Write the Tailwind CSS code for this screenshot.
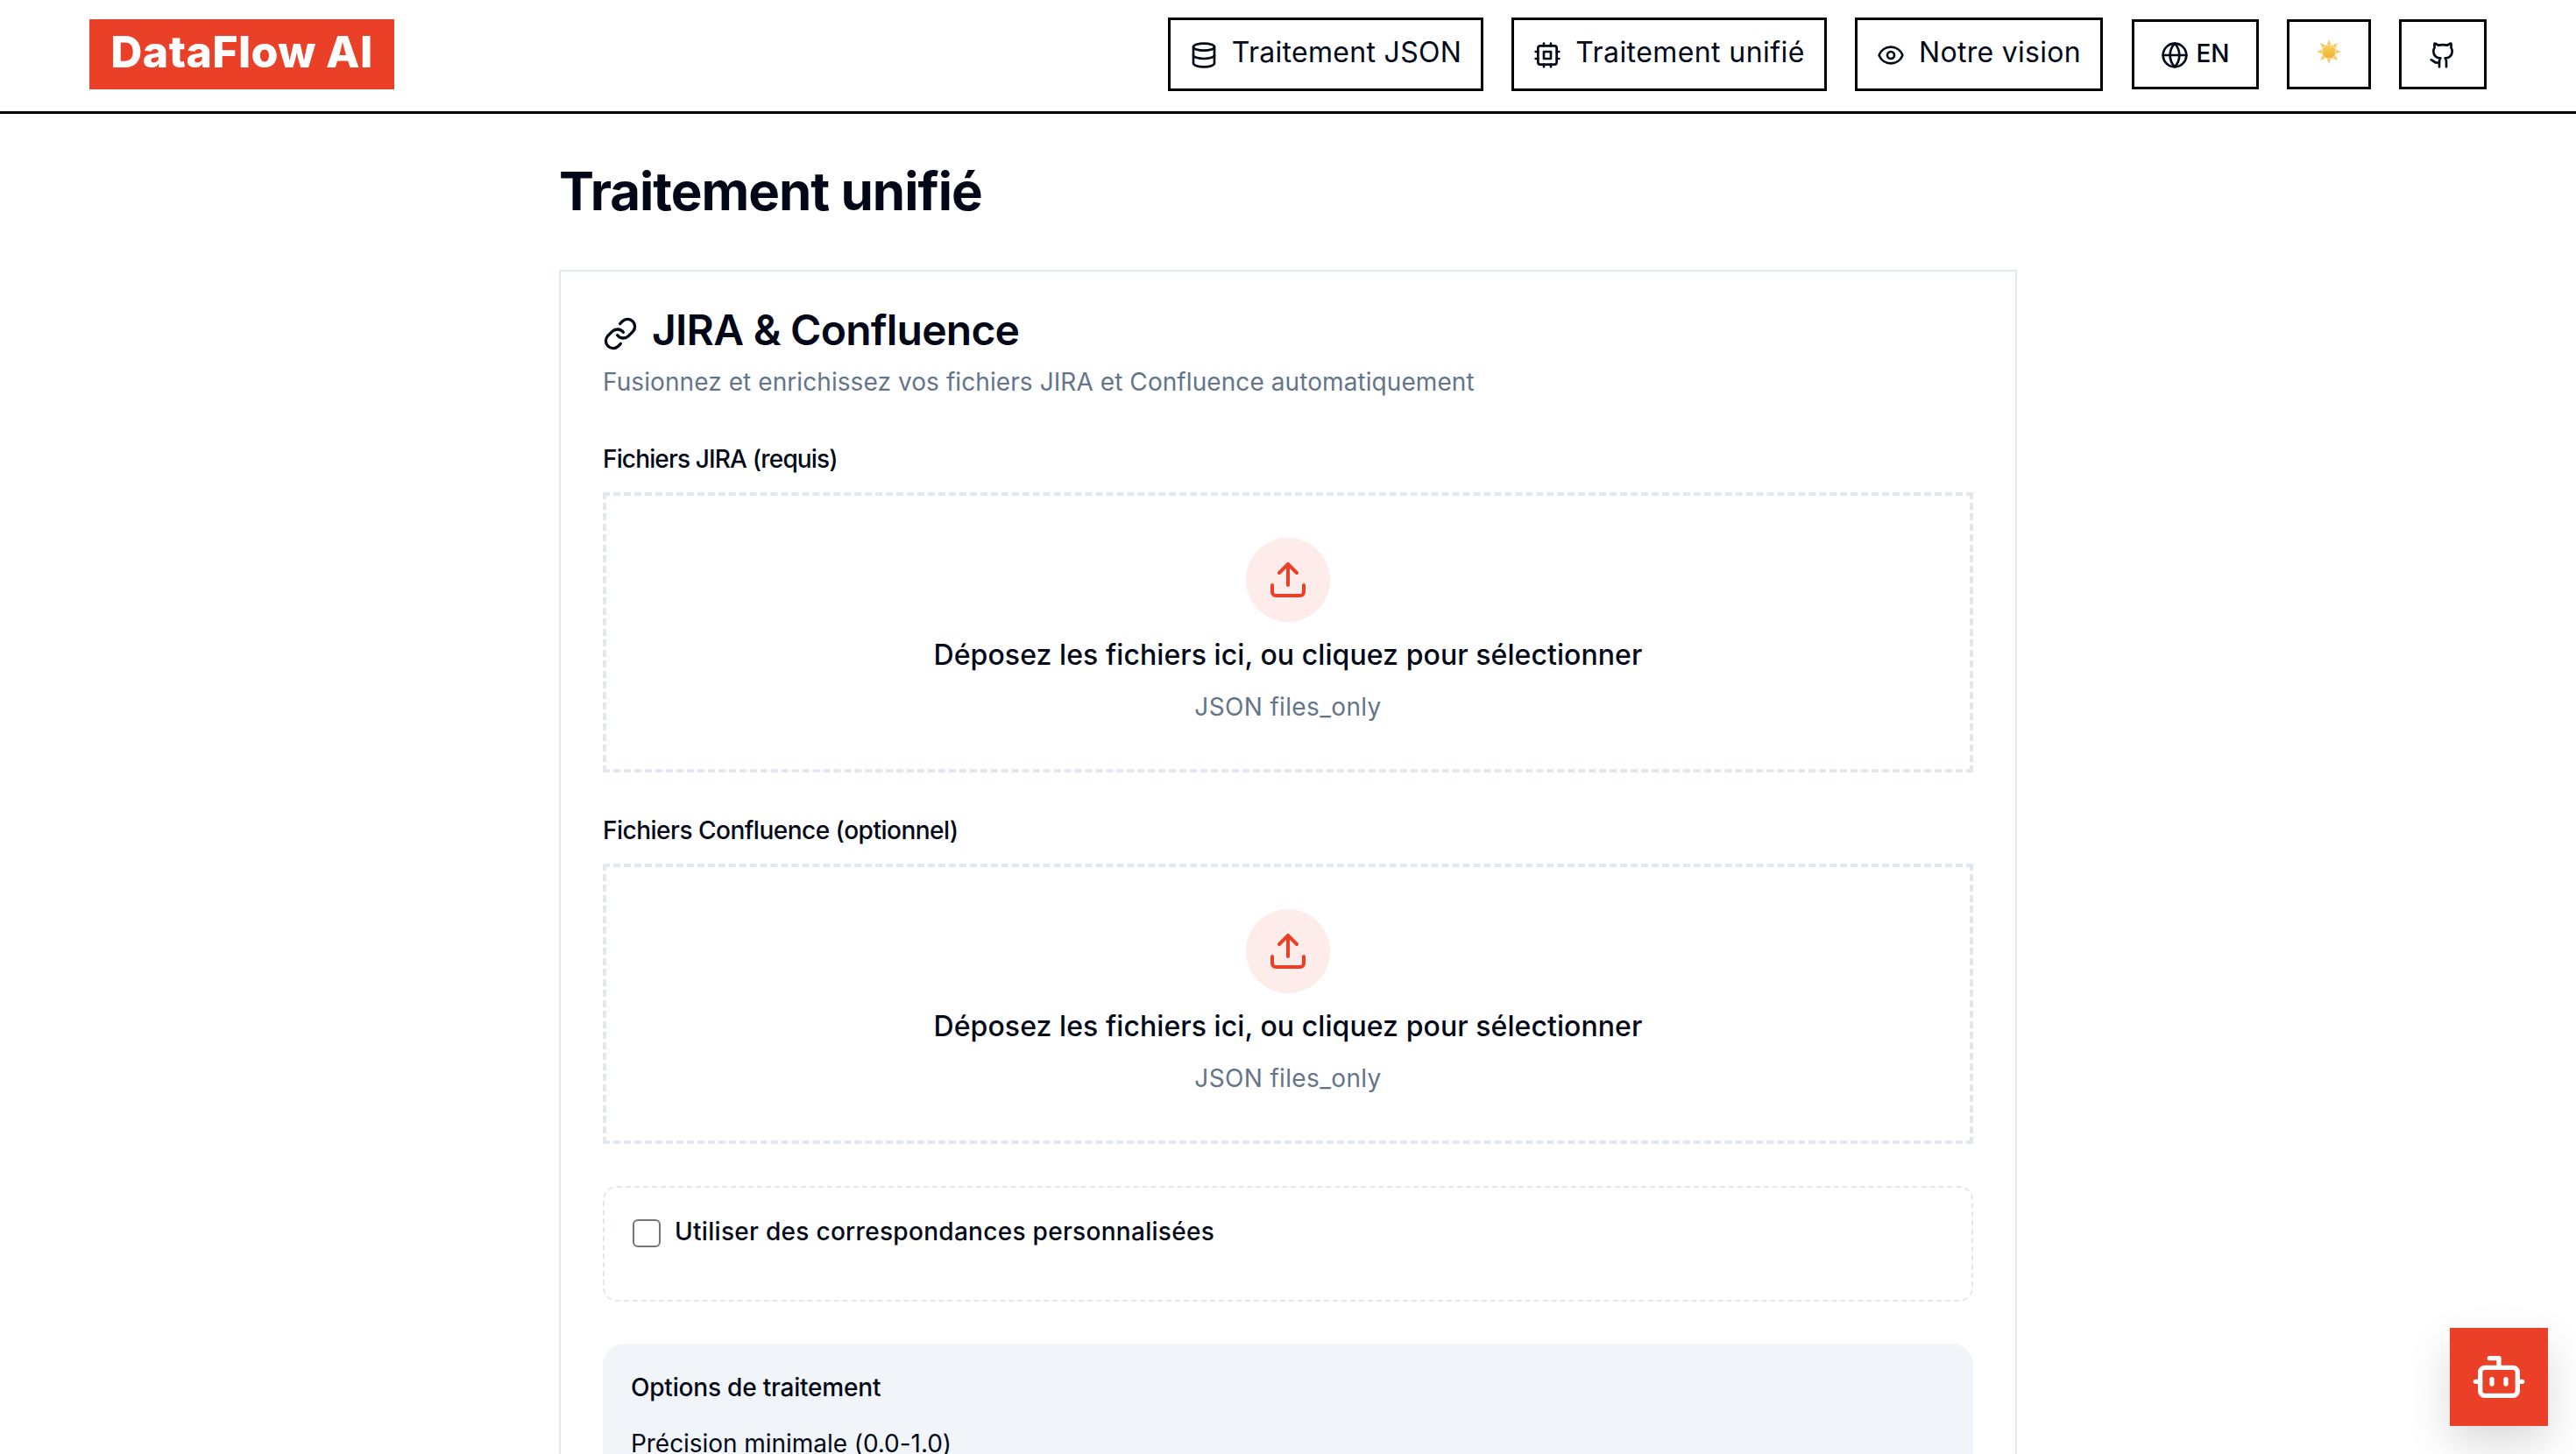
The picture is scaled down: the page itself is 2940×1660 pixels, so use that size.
<!DOCTYPE html>
<html lang="fr">
  <head>
    <meta charset="UTF-8" />
    <meta name="viewport" content="width=device-width, initial-scale=1.0" />
    <title>DataFlow AI</title>
    <script src="https://cdn.jsdelivr.net/npm/@tailwindcss/browser@4"></script>
  </head>
  <body class="bg-white text-[#020817] font-['Inter',sans-serif]">
    <div class="h-screen overflow-hidden">
      <!-- Header -->
      <header class="h-[130px] border-b-[3px] border-black pl-[102px] pr-[102px] flex items-center justify-between">
        <a class="h-[80px] w-[348px] -mt-[3px] bg-[#eb4028] text-white text-[50px] font-extrabold tracking-[0.4px] flex items-center justify-center"><span class="-mt-[5px]">DataFlow AI</span></a>
        <nav class="flex items-center gap-[32px] -mt-[3px]">
          <a class="h-[84px] w-[360px] border-[3px] border-black flex items-center justify-center gap-[16px] text-[32px] tracking-[0.3px]">
            <svg class="w-[32px] h-[32px] mt-[2px]" viewBox="0 0 24 24" fill="none" stroke="currentColor" stroke-width="2" stroke-linecap="round" stroke-linejoin="round"><ellipse cx="12" cy="5" rx="9" ry="3"/><path d="M3 5V19A9 3 0 0 0 21 19V5"/><path d="M3 12A9 3 0 0 0 21 12"/></svg>
            <span class="-mt-[4px]">Traitement JSON</span>
          </a>
          <a class="h-[84px] w-[360px] border-[3px] border-black flex items-center justify-center gap-[16px] text-[32px] tracking-[0.42px]">
            <svg class="w-[32px] h-[32px] mt-[2px]" viewBox="0 0 24 24" fill="none" stroke="currentColor" stroke-width="2" stroke-linecap="round" stroke-linejoin="round"><rect x="4" y="4" width="16" height="16" rx="2"/><rect x="9" y="9" width="6" height="6"/><path d="M15 2v2M15 20v2M2 15h2M2 9h2M20 15h2M20 9h2M9 2v2M9 20v2"/></svg>
            <span class="-mt-[4px]">Traitement unifié</span>
          </a>
          <a class="h-[84px] w-[283px] border-[3px] border-black flex items-center justify-center gap-[16px] text-[32px] tracking-[0.3px]">
            <svg class="w-[32px] h-[32px] mt-[2px]" viewBox="0 0 24 24" fill="none" stroke="currentColor" stroke-width="2" stroke-linecap="round" stroke-linejoin="round"><path d="M2.062 12.348a1 1 0 0 1 0-.696 10.75 10.75 0 0 1 19.876 0 1 1 0 0 1 0 .696 10.75 10.75 0 0 1-19.876 0"/><circle cx="12" cy="12" r="3"/></svg>
            <span class="-mt-[4px]">Notre vision</span>
          </a>
          <button class="ml-[1px] h-[80px] w-[145px] border-[3px] border-black flex items-center justify-center gap-[8px] text-[28px] font-medium">
            <svg class="w-[32px] h-[32px] mt-[2px]" viewBox="0 0 24 24" fill="none" stroke="currentColor" stroke-width="2" stroke-linecap="round" stroke-linejoin="round"><circle cx="12" cy="12" r="10"/><path d="M12 2a14.5 14.5 0 0 0 0 20 14.5 14.5 0 0 0 0-20"/><path d="M2 12h20"/></svg>
            <span class="-mt-[2px]">EN</span>
          </button>
          <button class="h-[80px] w-[96px] border-[3px] border-black flex items-center justify-center">
            <svg class="w-[28px] h-[28px] -mt-[6px]" viewBox="0 0 28 28">
              <defs><linearGradient id="sunfill" x1="0" y1="0" x2="0" y2="1"><stop offset="0%" stop-color="#f7d560"/><stop offset="100%" stop-color="#f0ad2e"/></linearGradient></defs>
              <path d="M14 0l2.500 6.500h-5zM14 28l-2.500-6.500h5zM0 14l6.500-2.500v5zM28 14l-6.500 2.500v-5zM4 4l6 2.500-3.500 3.500zM24 4l-2.500 6-3.500-3.500zM4 24l2.500-6 3.500 3.500zM24 24l-6-2.500 3.500-3.500z" fill="#f8c868"/>
              <circle cx="14" cy="14" r="8" fill="url(#sunfill)" stroke="#fbe6bd" stroke-width="1"/>
            </svg>
          </button>
          <a class="h-[80px] w-[100px] border-[3px] border-black flex items-center justify-center">
            <svg class="w-[32px] h-[32px] mt-[2px]" viewBox="0 0 24 24" fill="none" stroke="currentColor" stroke-width="2" stroke-linecap="round" stroke-linejoin="round"><path d="M15 22v-4a4.800 4.800 0 0 0-1-3.500c3 0 6-2 6-5.500.08-1.250-.27-2.480-1-3.500.28-1.150.28-2.350 0-3.500 0 0-1 0-3 1.500-2.640-.5-5.360-.5-8 0C6 2 5 2 5 2c-.3 1.150-.3 2.350 0 3.500A5.403 5.403 0 0 0 4 9c0 3.500 3 5.500 6 5.500-.39.49-.68 1.050-.85 1.650-.17.600-.22 1.230-.15 1.850v4"/><path d="M9 18c-4.510 2-5-2-7-2"/></svg>
          </a>
        </nav>
      </header>

      <main class="w-[1664px] mx-auto">
        <h1 class="h-[178px] pt-[52px] text-[60px] leading-[72px] font-bold tracking-[-1px]">Traitement unifié</h1>

        <section class="border-2 border-[#e2e8f0] px-[48px] pt-[36px]">
          <div class="flex items-center gap-[16px] h-[62px]">
            <svg class="w-[40px] h-[40px] mt-[8px]" viewBox="0 0 24 24" fill="none" stroke="currentColor" stroke-width="2" stroke-linecap="round" stroke-linejoin="round"><path d="M10 13a5 5 0 0 0 7.540.54l3-3a5 5 0 0 0-7.070-7.070l-1.720 1.710"/><path d="M14 11a5 5 0 0 0-7.540-.54l-3 3a5 5 0 0 0 7.070 7.070l1.710-1.710"/></svg>
            <h2 class="text-[48px] leading-[62px] font-semibold tracking-[-0.75px]">JIRA &amp; Confluence</h2>
          </div>
          <p class="mt-[8px] text-[28px] leading-[40px] tracking-[0.08px] text-[#64748b]">Fusionnez et enrichissez vos fichiers JIRA et Confluence automatiquement</p>

          <label class="block mt-[48px] text-[28px] leading-[40px] font-medium tracking-[-0.85px]">Fichiers JIRA (requis)</label>
          <div class="mt-[18px] h-[320px] border-4 border-dashed border-[#e2e8f0] flex flex-col items-center pt-[48px]">
            <div class="w-[96px] h-[96px] rounded-full bg-[#fdece9] flex items-center justify-center">
              <svg class="w-[48px] h-[48px] text-[#eb4028]" viewBox="0 0 24 24" fill="none" stroke="currentColor" stroke-width="2" stroke-linecap="round" stroke-linejoin="round"><path d="M21 15v4a2 2 0 0 1-2 2H5a2 2 0 0 1-2-2v-4"/><polyline points="17 8 12 3 7 8"/><line x1="12" x2="12" y1="3" y2="15"/></svg>
            </div>
            <p class="mt-[18px] text-[32px] leading-[40px] font-medium tracking-[0.07px]">Déposez les fichiers ici, ou cliquez pour sélectionner</p>
            <p class="mt-[19px] text-[28px] leading-[40px] tracking-[0.35px] text-[#64748b]">JSON files_only</p>
          </div>

          <label class="block mt-[46px] text-[28px] leading-[40px] font-medium tracking-[-0.5px]">Fichiers Confluence (optionnel)</label>
          <div class="mt-[18px] h-[320px] border-4 border-dashed border-[#e2e8f0] flex flex-col items-center pt-[48px]">
            <div class="w-[96px] h-[96px] rounded-full bg-[#fdece9] flex items-center justify-center">
              <svg class="w-[48px] h-[48px] text-[#eb4028]" viewBox="0 0 24 24" fill="none" stroke="currentColor" stroke-width="2" stroke-linecap="round" stroke-linejoin="round"><path d="M21 15v4a2 2 0 0 1-2 2H5a2 2 0 0 1-2-2v-4"/><polyline points="17 8 12 3 7 8"/><line x1="12" x2="12" y1="3" y2="15"/></svg>
            </div>
            <p class="mt-[18px] text-[32px] leading-[40px] font-medium tracking-[0.07px]">Déposez les fichiers ici, ou cliquez pour sélectionner</p>
            <p class="mt-[19px] text-[28px] leading-[40px] tracking-[0.35px] text-[#64748b]">JSON files_only</p>
          </div>

          <div class="mt-[48px] h-[132px] border-2 border-dashed border-[#e2e8f0] rounded-[16px] pl-[32px] pt-[30px] flex items-start gap-[16px]">
            <span class="w-[32px] h-[32px] mt-[6px] border-2 border-[#767676] rounded-[6px] bg-white"></span>
            <span class="text-[28px] leading-[40px] font-medium tracking-[0.3px]">Utiliser des correspondances personnalisées</span>
          </div>

          <div class="mt-[48px] bg-[#f1f5f9] rounded-[24px] px-[32px] pt-[30px] pb-[48px]">
            <h3 class="text-[28px] leading-[40px] font-medium tracking-[-0.2px]">Options de traitement</h3>
            <p class="mt-[24px] text-[28px] leading-[40px] tracking-[-0.05px]">Précision minimale (0.0-1.0)</p>
          </div>
        </section>
      </main>

      <button class="fixed right-[32px] bottom-[32px] w-[112px] h-[112px] bg-[#eb4028] text-white flex items-center justify-center shadow-[0_20px_50px_rgba(0,0,0,0.15)]">
        <svg class="w-[64px] h-[64px]" viewBox="0 0 24 24" fill="none" stroke="currentColor" stroke-width="2" stroke-linecap="round" stroke-linejoin="round"><path d="M12 8V4H8"/><rect width="16" height="12" x="4" y="8" rx="2"/><path d="M2 14h2"/><path d="M20 14h2"/><path d="M15 13v2"/><path d="M9 13v2"/></svg>
      </button>
    </div>
  </body>
</html>
